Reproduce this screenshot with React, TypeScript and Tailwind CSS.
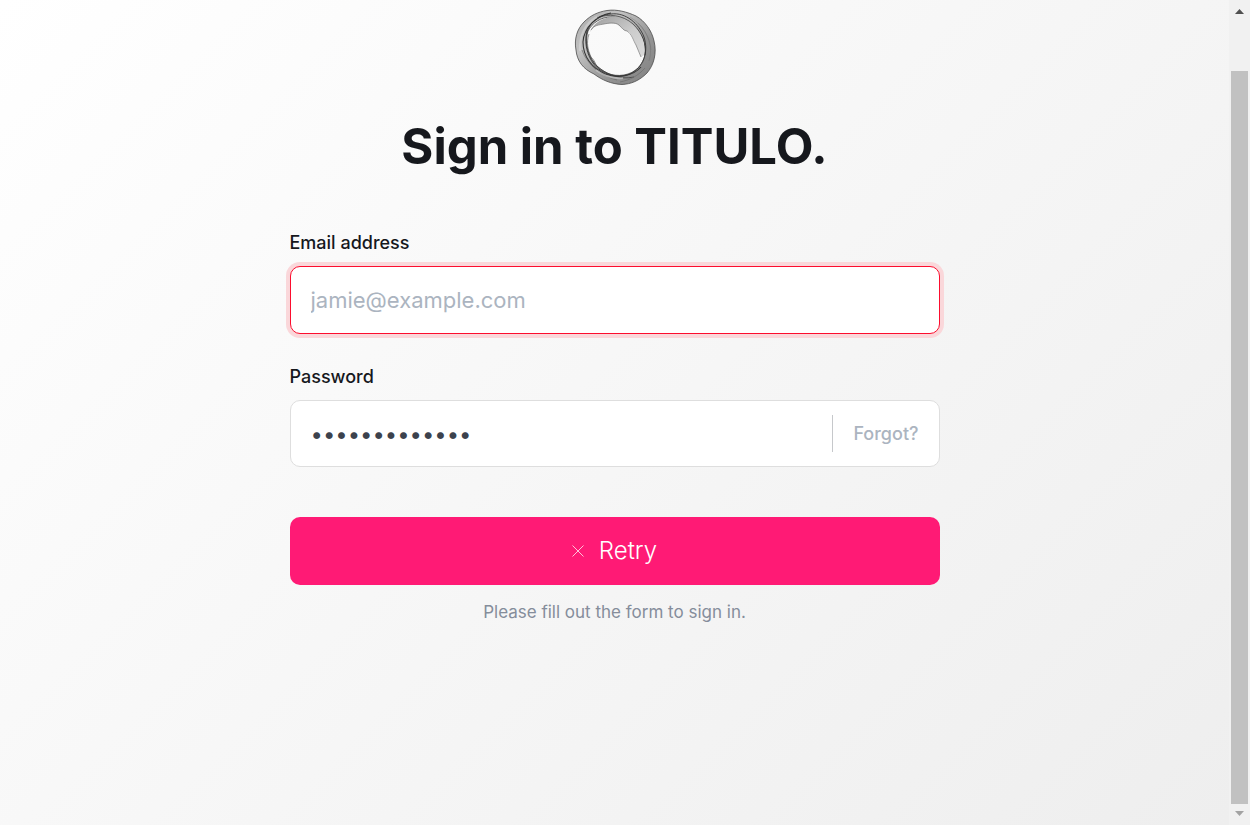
function RingLogo() {
  return (
    <svg viewBox="0 0 100 95" className="h-[95px] w-[100px]" role="img" aria-label="TITULO logo">
      <defs>
        <linearGradient id="band" x1="0" y1="0" x2="1" y2="1">
          <stop offset="0" stopColor="#a8a8a8" />
          <stop offset="0.3" stopColor="#c2c2c2" />
          <stop offset="0.65" stopColor="#949494" />
          <stop offset="1" stopColor="#808080" />
        </linearGradient>
        <linearGradient id="veil" x1="0" y1="0" x2="1" y2="1">
          <stop offset="0" stopColor="#9c9c9c" />
          <stop offset="0.55" stopColor="#cccccc" />
          <stop offset="1" stopColor="#dadada" />
        </linearGradient>
      </defs>
      <path
        fill="url(#band)"
        stroke="#4a4a4a"
        strokeWidth="0.8"
        fillRule="evenodd"
        d="M42 10.5C52 9 62 12 71 16C80 21 87 31 89 41C92 53 89 65 82 73C74 81 66 84 57 84.5C46 84 37 80 29 74C18 69 12 61 11 50C9 39 12 29 19 22C26 15 33 12 42 10.5ZM46 17C36 17 27 23 23 31C20 41 22 54 29 63C37 72 47 77 59 75C70 73 79 65 80 54C81 43 77 33 69 25C63 20 55 17 46 17Z"
      />
      <path
        fill="url(#veil)"
        d="M25 32C29 18 53 12 65 21C75 29 81 41 79 55L76 57C74 51 71 45 69 40C67 36 66 32 62 31C58 31 56 26 52 24C46 22 38 24 33 25C29 26 27 29 25 32Z"
      />
      <path fill="none" stroke="#777777" strokeWidth="0.7" d="M26 30C29 25 34 25 39 24C44 23 50 22 54 25C57 28 59 31 62 31C67 34 68 40 71 45C73 49 74 53 76 57" />
      <g fill="none" stroke="#353535" strokeWidth="0.9">
        <path d="M46 14C61 12 74 24 79 37C84 53 78 67 65 74C51 79 36 74 28 63C19 50 18 32 28 22C34 17 40 14 46 14Z" />
        <path d="M46 13C32 15 19 27 18 42C18 57 27 68 40 74C53 79 68 76 76 67" strokeWidth="1.1" />
        <path d="M32 18C43 13 58 15 68 24C77 33 82 44 80 55" strokeWidth="0.7" />
        <path d="M22 30C19 44 24 58 33 67C43 75 55 80 69 77" strokeWidth="0.7" />
      </g>
      <g fill="none" stroke="#6b6b6b" strokeWidth="0.7">
        <path d="M24 34C21 43 23 50 26 57C29 60 30 62 31 65M17 50C22 65 38 77 52 80M55 82C65 80 73 76 80 68" />
        <path d="M73 23C84 34 88 48 84 61M65 17C78 25 85 37 86 50" opacity="0.5" />
      </g>
      <path fill="none" stroke="#dcdcdc" strokeWidth="2" opacity="0.5" d="M15 51C14 36 20 23 32 17M31 70C39 76 48 79 58 78" />
    </svg>
  );
}

function PageScrollbar() {
  return (
    <div aria-hidden="true" className="flex w-[21px] shrink-0 flex-col items-center bg-[#f1f1f1] py-[9px]">
      <svg viewBox="0 0 9 5" className="h-[5px] w-[9px]"><path d="M4.5 0L9 5H0Z" fill="#505050" /></svg>
      <div className="mt-[57px] mb-[7px] w-[17px] flex-1 bg-[#c1c1c1]" />
      <svg viewBox="0 0 9 5" className="h-[5px] w-[9px]"><path d="M0 0H9L4.5 5Z" fill="#a3a3a3" /></svg>
    </div>
  );
}

export default function App() {
  return (
    <div className="flex min-h-screen font-['Inter',sans-serif]">
      <main className="flex flex-1 flex-col items-center bg-linear-135 from-white to-[#eeeeee] px-6">
        <RingLogo />
        <h1 className="mt-5 text-center text-[49px] leading-[64px] font-bold text-[#16181d]">Sign in to TITULO.</h1>
        <form noValidate onSubmit={(event) => event.preventDefault()} className="mt-[52px] flex w-full max-w-[650px] flex-col">
          <label htmlFor="email" className="text-lg leading-6 font-medium text-[#16181d]">Email address</label>
          <input
            id="email"
            type="email"
            aria-invalid="true"
            placeholder="jamie@example.com"
            className="mt-[11px] h-[68px] rounded-[10px] border border-[#fc0d2e] bg-white px-5 text-[22px] text-[#3c424d] ring-4 ring-[#fad7da] outline-none placeholder:text-[#abb4c0]"
          />
          <label htmlFor="password" className="mt-[31px] text-lg leading-6 font-medium text-[#16181d]">Password</label>
          <div className="mt-[11px] flex h-[67px] items-center rounded-[10px] border border-[#dedede] bg-white">
            <input
              id="password"
              type="password"
              defaultValue="correcthorse1"
              className="h-full min-w-0 flex-1 rounded-[10px] bg-transparent px-5 text-[22px] text-[#3c424d] outline-none"
            />
            <a href="#forgot" className="flex h-[37px] items-center border-l border-[#c6c8cb] px-5 text-lg font-medium text-[#abb4c0]">Forgot?</a>
          </div>
          <button type="submit" className="mt-[50px] flex h-[68px] items-center justify-center gap-[15px] rounded-[10px] bg-[#ff1a75] text-2xl font-light text-white">
            <svg viewBox="0 0 12 12" className="size-3" aria-hidden="true"><path d="M0.5 0.5L11.5 11.5M11.5 0.5L0.5 11.5" stroke="#ffc1da" strokeWidth="1" /></svg>
            Retry
          </button>
        </form>
        <p className="mt-[15px] text-center text-[17px] leading-6 text-[#858d9b]">Please fill out the form to sign in.</p>
      </main>
      <PageScrollbar />
    </div>
  );
}
